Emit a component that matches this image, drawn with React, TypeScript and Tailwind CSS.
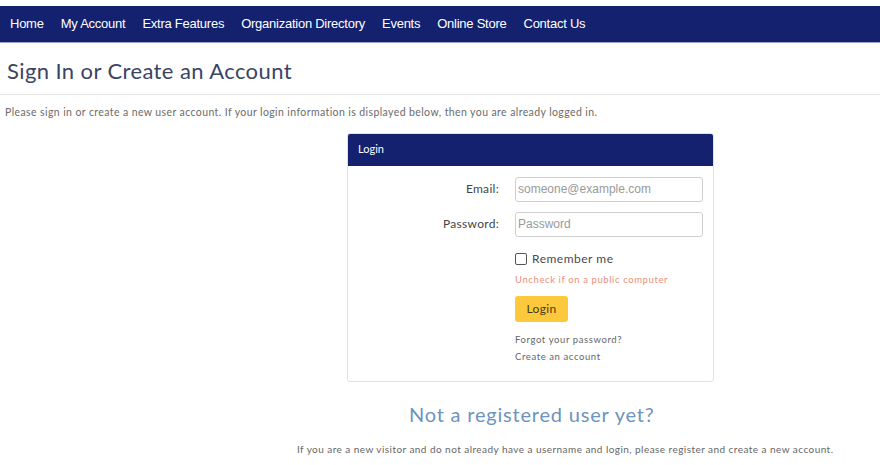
const body = { fontFamily: "Lato, 'Noto Sans', sans-serif" };
const nav = { fontFamily: "'Liberation Sans', Arial, sans-serif" };

const links = ["Home", "My Account", "Extra Features", "Organization Directory", "Events", "Online Store", "Contact Us"];

export default function App() {
    return (
        <div className="w-[880px] h-[465px] bg-white overflow-hidden text-[#555]" style={body}>
            <div className="pt-[6px]">
                <nav className="h-[37px] bg-[#13216f] flex items-center pl-[10px] gap-[17px] border-b border-[#9aa4cc]" style={nav}>
                    {links.map((l) => (
                        <span key={l} className="text-white text-[13px] tracking-[-0.25px]">{l}</span>
                    ))}
                </nav>
            </div>

            <h1 className="text-[22px] leading-none text-[#3b4463] pl-[7px] pt-[17px] pb-[12px] tracking-[0.4px]">Sign In or Create an Account</h1>
            <div className="border-t border-[#e6e6e6]"></div>
            <p className="text-[10.5px] tracking-[0.4px] text-[#6b6b6b] pl-[5px] pt-[12px] leading-none">
                Please sign in or create a new user account. If your login information is displayed below, then you are already logged in.
            </p>

            <div className="pl-[347px] pt-[15px]">
                <div className="w-[367px] h-[249px] border border-[#e2e2e2] rounded-[3px] overflow-hidden">
                    <div className="h-[32px] bg-[#13216f] text-white text-[11px] flex items-center pl-[10px]">Login</div>
                    <div className="pt-[11px] flex flex-col">
                        <div className="flex items-center h-[25px]">
                            <label className="w-[151px] text-right text-[12px] tracking-[0.3px] text-[#444]">Email:</label>
                            <div className="ml-[16px] w-[188px] h-[25px] border border-[#cfcfcf] rounded-[3px] flex items-center px-[2px] text-[12px] text-[#9a9a9a]" style={nav}>someone@example.com</div>
                        </div>
                        <div className="flex items-center h-[25px] mt-[10px]">
                            <label className="w-[151px] text-right text-[12px] tracking-[0.3px] text-[#444]">Password:</label>
                            <div className="ml-[16px] w-[188px] h-[25px] border border-[#cfcfcf] rounded-[3px] flex items-center px-[2px] text-[12px] text-[#9a9a9a]" style={nav}>Password</div>
                        </div>
                        <div className="pl-[167px] pt-[15px] flex flex-col">
                            <div className="flex items-center gap-[5px] h-[14px]">
                                <span className="w-[12px] h-[12px] border border-[#555] rounded-[2px]"></span>
                                <span className="text-[12px] tracking-[0.5px] text-[#4a4a4a]">Remember me</span>
                            </div>
                            <span className="text-[9.5px] tracking-[0.6px] text-[#ec8f7a] mt-[9px] leading-none">Uncheck if on a public computer</span>
                            <button className="mt-[12px] w-[53px] h-[26px] bg-[#fcc83c] rounded-[3px] text-[12px] tracking-[0.3px] text-[#4a3b10]">Login</button>
                            <span className="text-[9.5px] tracking-[0.6px] text-[#666] mt-[13px] leading-none">Forgot your password?</span>
                            <span className="text-[9.5px] tracking-[0.6px] text-[#666] mt-[7px] leading-none">Create an account</span>
                        </div>
                    </div>
                </div>
            </div>

            <h2 className="pl-[409px] text-[20px] text-[#6d93bf] pt-[22px] leading-none tracking-[0.8px]">Not a registered user yet?</h2>
            <p className="pl-[297px] pt-[20px] text-[10px] tracking-[0.45px] text-[#666] leading-none">
                If you are a new visitor and do not already have a username and login, please register and create a new account.
            </p>
        </div>
    );
}
